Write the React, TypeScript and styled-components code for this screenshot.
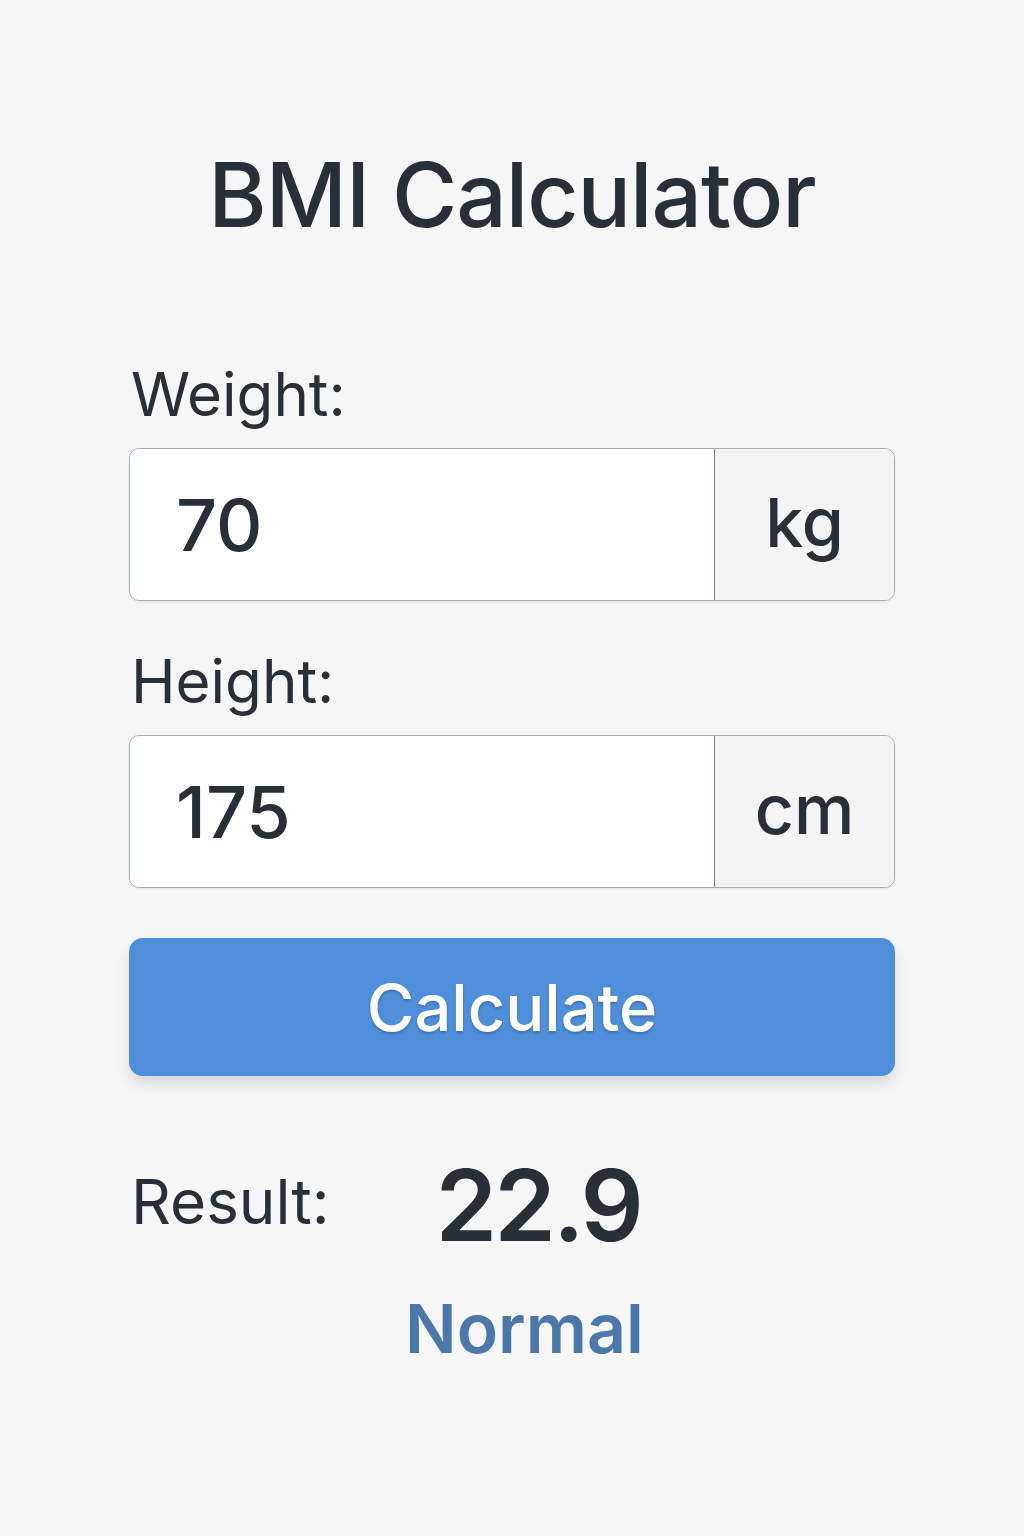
import React from "react";
import styled, { createGlobalStyle } from "styled-components";

const GlobalStyle = createGlobalStyle`
  html, body {
    margin: 0;
    padding: 0;
    background: #f6f6f6;
  }
  body {
    font-family: Inter, "Noto Sans", "Liberation Sans", sans-serif;
    color: #272f39;
  }
`;

const Page = styled.main`
  width: 1024px;
  min-height: 1536px;
  box-sizing: border-box;
  padding: 140px 129px 0;
  display: flex;
  flex-direction: column;
`;

const Title = styled.h1`
  margin: 0 0 114px;
  text-align: center;
  font-size: 89px;
  font-weight: 500;
  letter-spacing: -1px;
  line-height: 110px;
`;

const Field = styled.div`
  display: flex;
  flex-direction: column;
  margin-bottom: 50px;
`;

const Label = styled.label`
  font-size: 60px;
  font-weight: 400;
  line-height: 60px;
  margin-bottom: 24px;
  padding-left: 2px;
`;

const InputGroup = styled.div`
  display: flex;
  height: 153px;
  box-sizing: border-box;
  border: 1.5px solid #9fb0ba;
  border-radius: 10px;
  overflow: hidden;
  box-shadow: 0 1px 3px rgba(0, 0, 0, 0.08);
`;

const Input = styled.input`
  flex: 1;
  min-width: 0;
  border: none;
  outline: none;
  background: #ffffff;
  padding: 0 0 0 46px;
  font-family: inherit;
  font-size: 72px;
  font-weight: 500;
  color: #272f39;
`;

const Unit = styled.span`
  width: 180px;
  flex: none;
  display: flex;
  align-items: center;
  justify-content: center;
  background: #f4f4f4;
  border-left: 1.5px solid #6f8592;
  font-size: 68px;
  font-weight: 500;
  padding-bottom: 6px;
  box-sizing: border-box;
`;

const Button = styled.button`
  height: 138px;
  border: none;
  border-radius: 14px;
  background: #4f8ed8;
  color: #ffffff;
  font-family: inherit;
  font-size: 65px;
  font-weight: 500;
  box-shadow: 0 8px 14px rgba(0, 0, 0, 0.12);
  text-shadow: 0 2px 3px rgba(0, 0, 0, 0.2);
  cursor: pointer;
`;

const ResultRow = styled.section`
  display: flex;
  align-items: flex-start;
  margin-top: 74px;
  padding-left: 2px;
`;

const ResultLabel = styled.span`
  font-size: 62px;
  line-height: 80px;
  margin-top: 12px;
  width: 274px;
`;

const ResultValues = styled.div`
  display: flex;
  flex-direction: column;
  align-items: flex-end;
`;

const Score = styled.span`
  font-size: 99px;
  font-weight: 600;
  line-height: 110px;
  letter-spacing: -3px;
  margin-right: 3px;
`;

const Category = styled.span`
  margin-top: 28px;
  font-size: 68px;
  font-weight: 600;
  color: #4c77a9;
  line-height: 80px;
`;

export default function App() {
  return (
    <>
      <GlobalStyle />
      <Page>
        <Title>BMI Calculator</Title>
        <Field>
          <Label>Weight:</Label>
          <InputGroup>
            <Input defaultValue="70" />
            <Unit>kg</Unit>
          </InputGroup>
        </Field>
        <Field>
          <Label>Height:</Label>
          <InputGroup>
            <Input defaultValue="175" />
            <Unit>cm</Unit>
          </InputGroup>
        </Field>
        <Button>Calculate</Button>
        <ResultRow>
          <ResultLabel>Result:</ResultLabel>
          <ResultValues>
            <Score>22.9</Score>
            <Category>Normal</Category>
          </ResultValues>
        </ResultRow>
      </Page>
    </>
  );
}
